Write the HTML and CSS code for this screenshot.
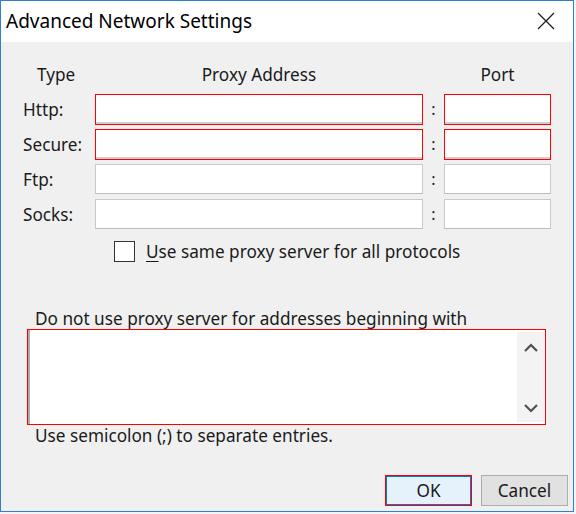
FILE: index.html
```html
<!DOCTYPE html>
<html>
<head>
<meta charset="utf-8">
<link rel="stylesheet" href="styles.css">
</head>
<body>
<div class="window">
  <div class="titlebar">
    <span class="title">Advanced Network Settings</span>
    <svg class="close" width="18" height="18" viewBox="0 0 18 18"><path d="M1 1 L17 17 M17 1 L1 17" stroke="#1a1a1a" stroke-width="1.2" fill="none"/></svg>
  </div>
  <div class="content">
    <div class="grid">
      <div class="head type">Type</div>
      <div class="head">Proxy Address</div>
      <div></div>
      <div class="head">Port</div>

      <div class="label">Http:</div>
      <div class="input red"></div>
      <div class="colon">:</div>
      <div class="input red"></div>

      <div class="label">Secure:</div>
      <div class="input red"></div>
      <div class="colon">:</div>
      <div class="input red"></div>

      <div class="label">Ftp:</div>
      <div class="input"></div>
      <div class="colon">:</div>
      <div class="input"></div>

      <div class="label">Socks:</div>
      <div class="input"></div>
      <div class="colon">:</div>
      <div class="input"></div>
    </div>

    <div class="check-row">
      <span class="checkbox"></span>
      <span class="check-label"><u>U</u>se same proxy server for all protocols</span>
    </div>

    <div class="exceptions">
      <div class="ex-label">Do not use proxy server for addresses beginning with</div>
      <div class="textarea">
        <div class="ta-text"></div>
        <div class="scroll">
          <svg width="16" height="11" viewBox="0 0 16 11"><path d="M2 9 L8 3 L14 9" stroke="#505050" stroke-width="2.2" fill="none"/></svg>
          <svg width="16" height="11" viewBox="0 0 16 11"><path d="M2 2 L8 8 L14 2" stroke="#505050" stroke-width="2.2" fill="none"/></svg>
        </div>
      </div>
      <div class="hint">Use semicolon (;) to separate entries.</div>
    </div>

    <div class="buttons">
      <div class="btn ok">OK</div>
      <div class="btn">Cancel</div>
    </div>
  </div>
</div>
</body>
</html>
```
FILE: styles.css
```css
html, body {
  margin: 0;
  padding: 0;
  background: #f4f4f4;
}
body {
  width: 576px;
  height: 514px;
  overflow: hidden;
  font-family: "Noto Sans", "Open Sans", sans-serif;
  color: #1a1a1a;
}
.window {
  box-sizing: border-box;
  width: 574px;
  height: 512px;
  border: 1px solid #2f7fd3;
  background: #f0f0f0;
  display: flex;
  flex-direction: column;
}
.titlebar {
  height: 41px;
  background: #fff;
  display: flex;
  align-items: center;
  justify-content: space-between;
  padding: 0 18px 0 5px;
  flex: none;
}
.title {
  font-size: 19px;
  color: #000;
  margin-top: -2px;
}
.close {
  margin-top: -2px;
}
.content {
  flex: 1;
  display: flex;
  flex-direction: column;
  font-size: 17.2px;
}
.grid {
  display: grid;
  grid-template-columns: 72px 328px 21px 107px;
  grid-template-rows: 30px 30px 30px 30px 30px;
  row-gap: 5px;
  margin: 17px 0 0 22px;
  align-items: center;
}
.head {
  text-align: center;
  align-self: end;
  padding-bottom: 3px;
}
.head.type {
  text-align: left;
  padding-left: 14px;
}
.input {
  box-sizing: border-box;
  height: 30px;
  background: #fff;
  border: 1px solid #c9c9c9;
  border-bottom-color: #bdbdbd;
}
.input.red {
  height: 31px;
  border: 1px solid #f00;
  box-shadow: inset 0 -2px 0 #cfcfcf;
}
.colon {
  text-align: center;
  font-size: 16px;
}
.check-row {
  display: flex;
  align-items: center;
  margin: 11px 0 0 113px;
  height: 22px;
}
.checkbox {
  box-sizing: border-box;
  width: 21px;
  height: 21px;
  border: 1px solid #333;
  background: #fff;
  margin-right: 11px;
}
.check-label u {
  text-decoration-thickness: 1px;
  text-underline-offset: 3px;
}
.exceptions {
  margin: 47px 0 0 26px;
  width: 519px;
}
.ex-label {
  padding-left: 8px;
  line-height: 20px;
}
.textarea {
  box-sizing: border-box;
  height: 96px;
  border: 1px solid #f00;
  box-shadow: inset 2px 0 0 #ababab;
  background: #fff;
  display: flex;
  padding: 2px 1px 2px 2px;
}
.ta-text {
  flex: 1;
}
.scroll {
  width: 27px;
  background: #f3f3f3;
  display: flex;
  flex-direction: column;
  justify-content: space-between;
  align-items: center;
  padding: 10px 0 8px;
}
.hint {
  padding-left: 8px;
  line-height: 22px;
}
.buttons {
  display: flex;
  justify-content: flex-end;
  gap: 9px;
  margin: auto 5px 5px 0;
}
.btn {
  box-sizing: border-box;
  width: 87px;
  height: 31px;
  background: #e1e1e1;
  border: 1px solid #adadad;
  display: flex;
  align-items: center;
  justify-content: center;
}
.btn.ok {
  background: #e5f1fb;
  border: 1px solid #f00;
  box-shadow: inset 0 0 0 1px #0078d7;
}
```
